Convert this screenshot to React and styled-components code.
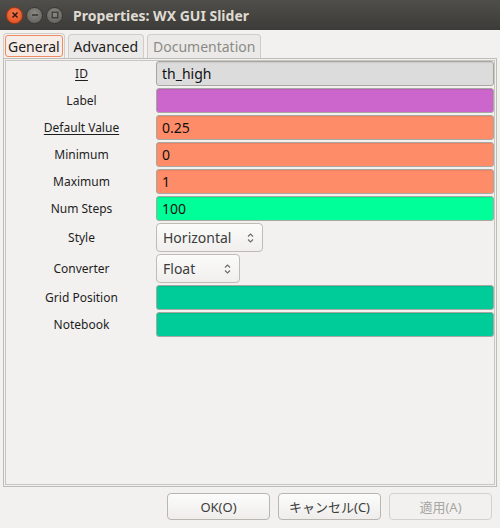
import styled, { createGlobalStyle } from 'styled-components';

const GlobalStyle = createGlobalStyle`
  html, body {
    margin: 0;
    padding: 0;
    background: #f2f1f0;
  }
  * {
    box-sizing: border-box;
  }
`;

const uiFont = `"Noto Sans", "Noto Sans CJK JP", sans-serif`;

const Window = styled.div`
  display: flex;
  flex-direction: column;
  width: 500px;
  height: 528px;
  background: #f2f1f0;
  font-family: ${uiFont};
  color: #3c3c3c;
  overflow: hidden;
`;

const TitleBar = styled.div`
  display: flex;
  align-items: center;
  height: 30px;
  flex-shrink: 0;
  padding: 0 0 0 6px;
  background: linear-gradient(#4f4e4a, #3c3b37);
`;

const WindowButtons = styled.div`
  display: flex;
  gap: 3px;
  align-items: center;
`;

const CircleButton = styled.div`
  display: flex;
  align-items: center;
  justify-content: center;
  width: 17px;
  height: 17px;
  border-radius: 50%;
  background: ${(p) =>
    p.close
      ? 'radial-gradient(circle at 50% 35%, #f47a52, #df4a16)'
      : 'radial-gradient(circle at 50% 35%, #8a8983, #5c5b56)'};
  border: 1px solid ${(p) => (p.close ? '#a8350f' : '#393834')};
`;

const Title = styled.div`
  margin-left: 10px;
  font-size: 14px;
  font-weight: bold;
  color: #dfdbd2;
`;

const Body = styled.div`
  display: flex;
  flex-direction: column;
  flex: 1;
  padding: 3px 3px 0 3px;
`;

const TabRow = styled.div`
  display: flex;
  align-items: flex-end;
  height: 25px;
  gap: 3px;
`;

const Tab = styled.div`
  display: flex;
  align-items: center;
  height: ${(p) => (p.active ? '25px' : '24px')};
  padding: ${(p) => (p.active ? '0 1px' : '0 5px')};
  border: 1px solid #cfcdc8;
  border-bottom: none;
  border-radius: 4px 4px 0 0;
  background: ${(p) => (p.active ? '#f2f1f0' : '#ebeae8')};
  font-size: 14px;
  color: ${(p) => (p.disabled ? '#8c8a86' : '#1c1c1c')};
`;

const FocusRing = styled.div`
  padding: 0 2px;
  height: 22px;
  display: flex;
  align-items: center;
  border: 1px solid #f08a62;
  border-radius: 3px;
  background: #f7ede8;
`;

const Panel = styled.div`
  flex: 1;
  border: 1px solid #bebcb7;
  box-shadow: inset 0 0 0 1px #f2f1f0, inset 0 0 0 2px #c8c6c1;
  padding: 2px 2px 3px 3px;
`;

const Grid = styled.div`
  display: grid;
  grid-template-columns: 149px 1fr;
  row-gap: 2px;
  align-items: center;
`;

const Label = styled.div`
  text-align: center;
  font-size: 12px;
  color: #1e1e1e;
  text-decoration: ${(p) => (p.underline ? 'underline' : 'none')};
  text-underline-offset: 2px;
`;

const Field = styled.div`
  display: flex;
  align-items: center;
  height: 25px;
  padding: 0 5px;
  border: 1px solid #a9a7a1;
  border-radius: 3px;
  background: ${(p) => p.bg};
  box-shadow: inset 0 1px 1px rgba(0, 0, 0, 0.08);
  font-size: 14px;
  color: #101010;
`;

const Combo = styled.div`
  display: flex;
  align-items: center;
  justify-content: space-between;
  width: ${(p) => p.width}px;
  height: 29px;
  padding: 0 8px 0 6px;
  border: 1px solid #bfbcb6;
  border-radius: 4px;
  background: linear-gradient(#fbfbfa, #f0efed);
  font-size: 14px;
  color: #3c3c3c;
`;

const ButtonRow = styled.div`
  display: flex;
  justify-content: flex-end;
  gap: 8px;
  padding: 6px 5px 0 0;
  height: 41px;
`;

const Button = styled.div`
  display: flex;
  align-items: center;
  justify-content: center;
  width: 103px;
  height: 27px;
  border: 1px solid ${(p) => (p.disabled ? '#d3d1cc' : '#b9b6b0')};
  border-radius: 4px;
  background: ${(p) =>
    p.disabled ? '#f2f1f0' : 'linear-gradient(#fcfcfc, #eeedeb)'};
  font-size: 13px;
  color: ${(p) => (p.disabled ? '#a8a6a2' : '#3c3c3c')};
`;

const Spinner = () => (
  <svg width="7" height="12" viewBox="0 0 7 12">
    <path d="M1 4.5 L3.5 2 L6 4.5" fill="none" stroke="#6b6a66" strokeWidth="1.1" />
    <path d="M1 7.5 L3.5 10 L6 7.5" fill="none" stroke="#6b6a66" strokeWidth="1.1" />
  </svg>
);

const rows = [
  { label: 'ID', underline: true, value: 'th_high', bg: '#dcdcdc' },
  { label: 'Label', value: '', bg: '#cc66cc' },
  { label: 'Default Value', underline: true, value: '0.25', bg: '#ff8c69' },
  { label: 'Minimum', value: '0', bg: '#ff8c69' },
  { label: 'Maximum', value: '1', bg: '#ff8c69' },
  { label: 'Num Steps', value: '100', bg: '#00ff99' },
  { label: 'Style', combo: 'Horizontal', width: 107 },
  { label: 'Converter', combo: 'Float', width: 84 },
  { label: 'Grid Position', value: '', bg: '#00cc99' },
  { label: 'Notebook', value: '', bg: '#00cc99' },
];

const App = () => {
  return (
    <Window>
      <GlobalStyle />
      <TitleBar>
        <WindowButtons>
          <CircleButton close>
            <svg width="8" height="8" viewBox="0 0 8 8">
              <path d="M1.5 1.5 L6.5 6.5 M6.5 1.5 L1.5 6.5" stroke="#3a1a0c" strokeWidth="1.6" />
            </svg>
          </CircleButton>
          <CircleButton>
            <svg width="8" height="8" viewBox="0 0 8 8">
              <path d="M1 4 L7 4" stroke="#3a3935" strokeWidth="1.6" />
            </svg>
          </CircleButton>
          <CircleButton>
            <svg width="8" height="8" viewBox="0 0 8 8">
              <rect x="1.2" y="1.2" width="5.6" height="5.6" fill="none" stroke="#3a3935" strokeWidth="1.3" />
            </svg>
          </CircleButton>
        </WindowButtons>
        <Title>Properties: WX GUI Slider</Title>
      </TitleBar>
      <Body>
        <TabRow>
          <Tab active>
            <FocusRing>General</FocusRing>
          </Tab>
          <Tab>Advanced</Tab>
          <Tab disabled>Documentation</Tab>
        </TabRow>
        <Panel>
          <Grid>
            {rows.map((row) => (
              <>
                <Label key={row.label + '-l'} underline={row.underline}>
                  {row.label}
                </Label>
                {row.combo ? (
                  <Combo key={row.label + '-c'} width={row.width}>
                    {row.combo}
                    <Spinner />
                  </Combo>
                ) : (
                  <Field key={row.label + '-f'} bg={row.bg}>
                    {row.value}
                  </Field>
                )}
              </>
            ))}
          </Grid>
        </Panel>
        <ButtonRow>
          <Button>OK(O)</Button>
          <Button>キャンセル(C)</Button>
          <Button disabled>適用(A)</Button>
        </ButtonRow>
      </Body>
    </Window>
  );
};

export default App;
